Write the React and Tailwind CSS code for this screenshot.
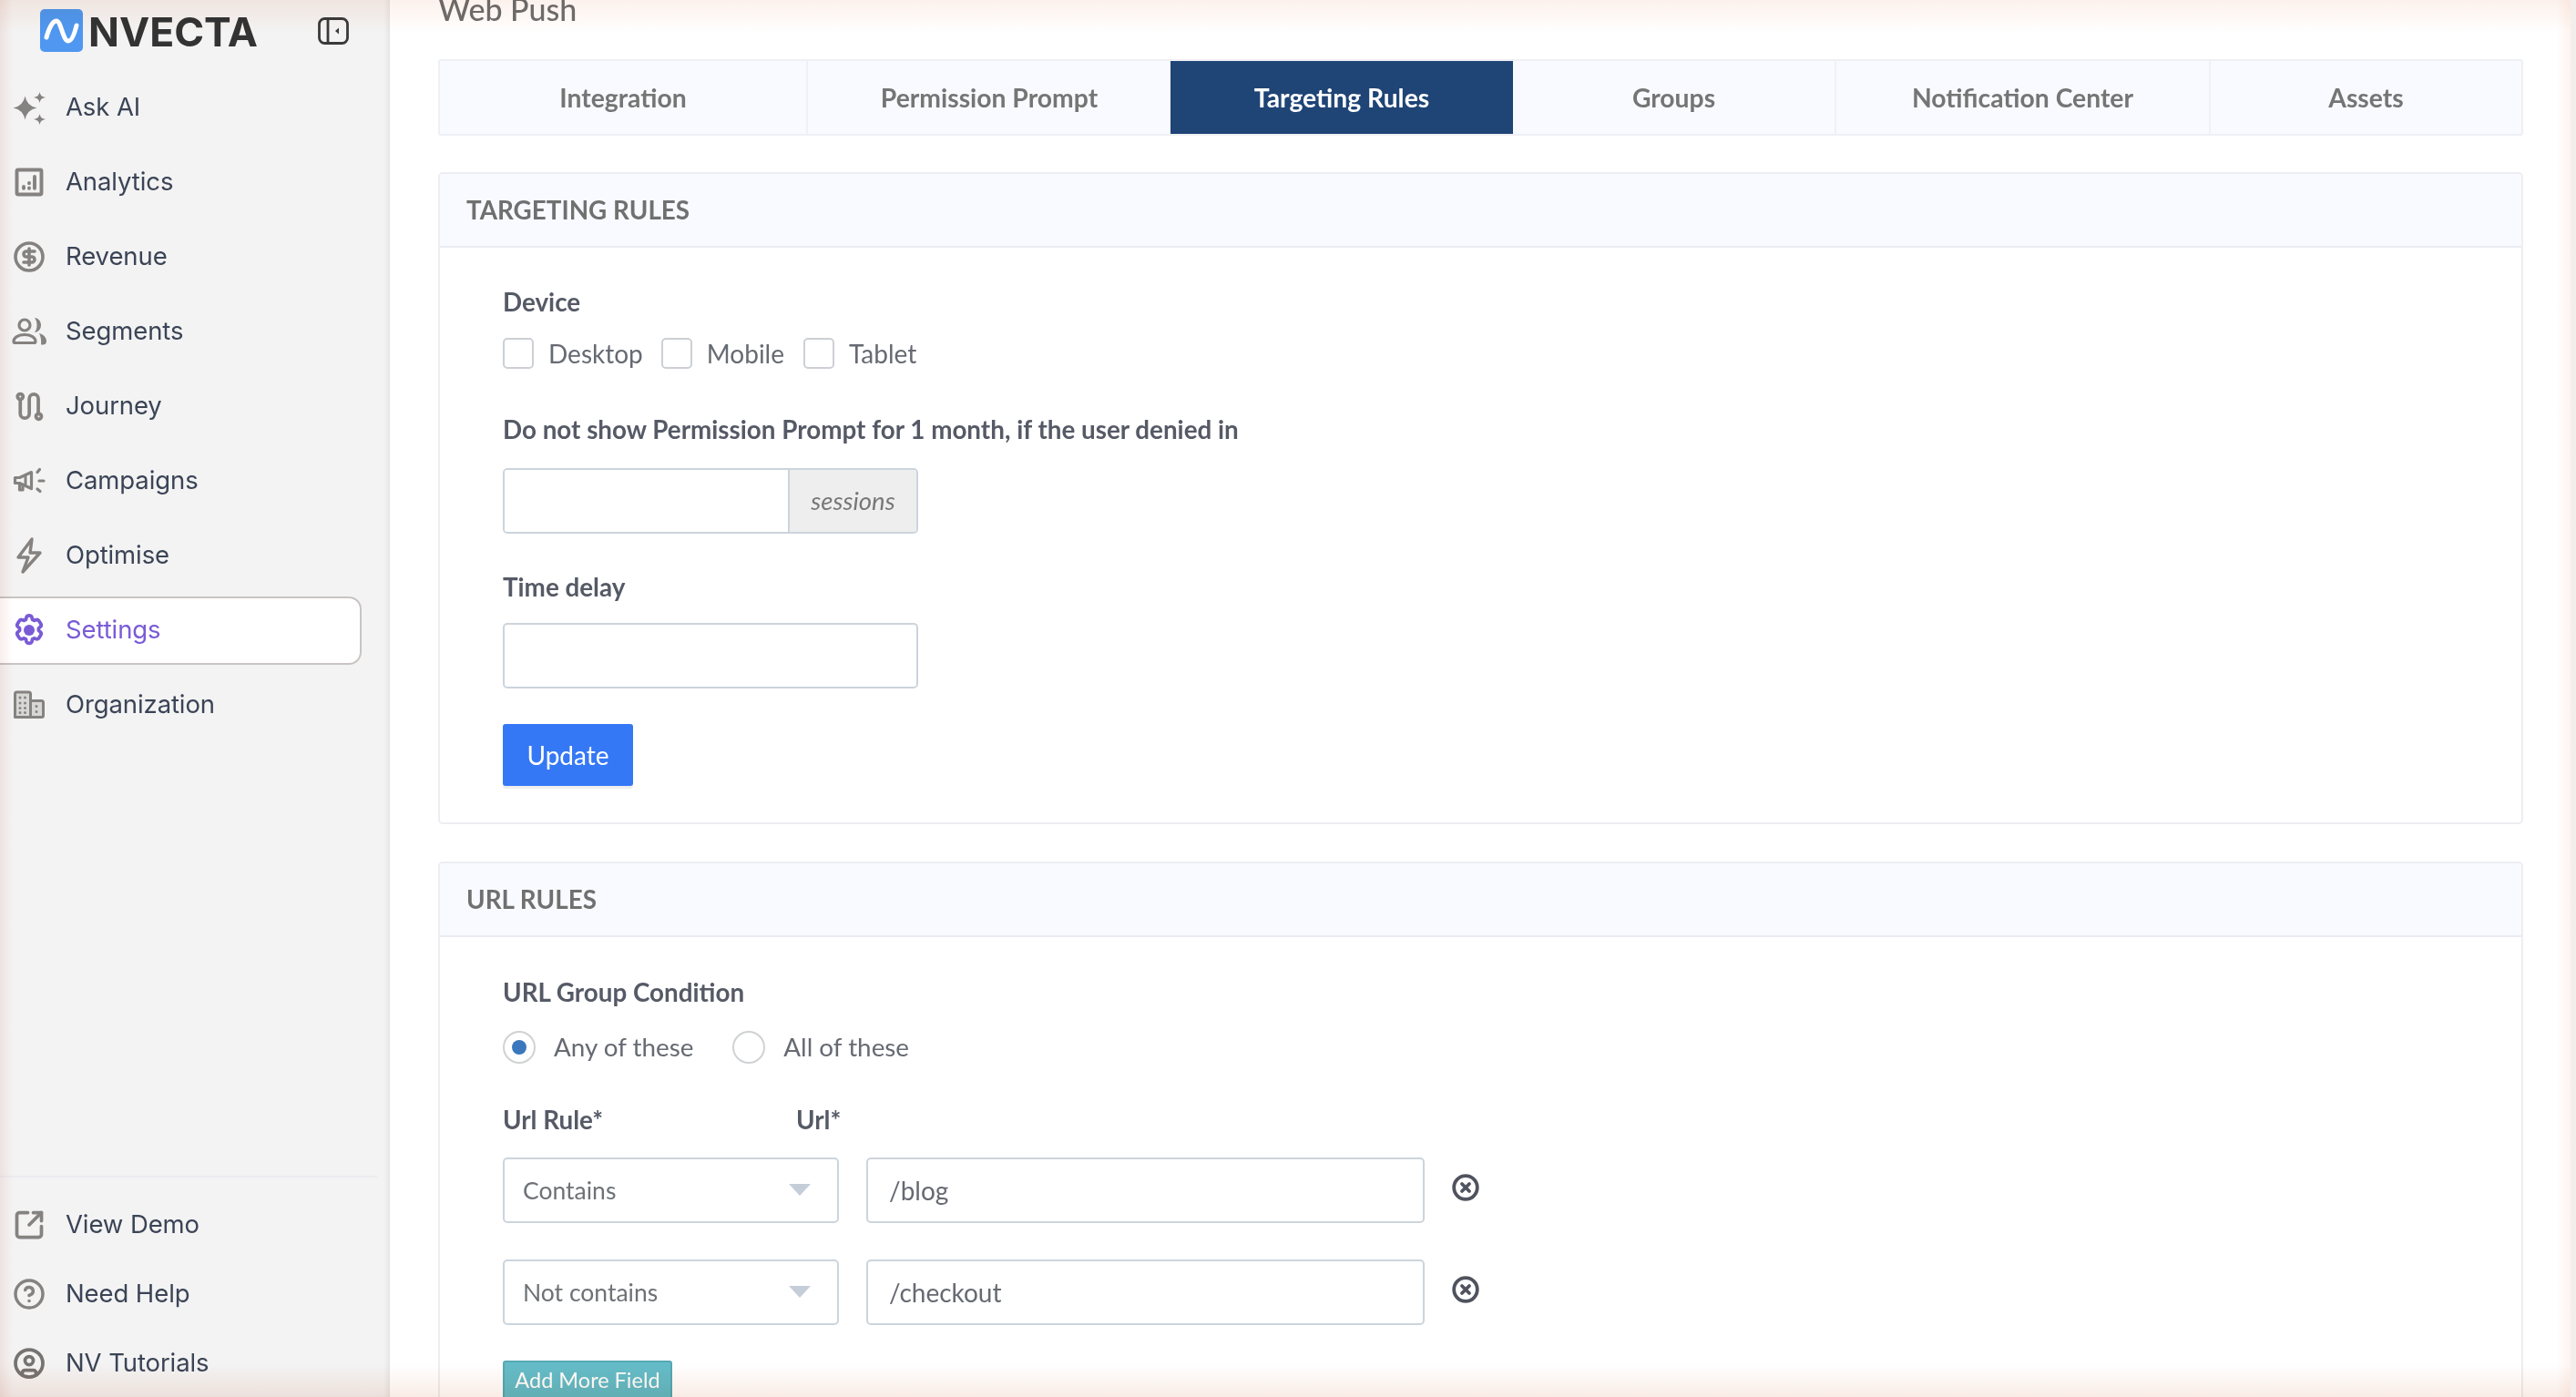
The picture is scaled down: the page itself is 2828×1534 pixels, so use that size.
import React from "react";
import { CircleDollarSign, SquareArrowOutUpRight, CircleHelp, CircleUser } from "lucide-react";

const GRAY = "#858280";

const S = ({ children, w = 2.6 }) => (
  <svg viewBox="0 0 24 24" width="36" height="36" fill="none" stroke={GRAY} strokeWidth={w} strokeLinecap="round" strokeLinejoin="round">{children}</svg>
);
const P = ({ children, vw = 38, vh = 38, w = 3.2 }) => (
  <svg viewBox={`0 0 ${vw} ${vh}`} width={vw} height={vh} className="shrink-0" fill="none" stroke={GRAY} strokeWidth={w} strokeLinecap="round" strokeLinejoin="round">{children}</svg>
);

const Sparkle = () => (
  <svg viewBox="0 0 38 38" width="38" height="38" className="shrink-0" fill={GRAY} stroke="none">
    <path d="M14.5 6.5Q16.5 17.5 27.5 19.5 16.5 21.5 14.5 32.5 12.5 21.5 1.5 19.5 12.5 17.5 14.5 6.5Z" />
    <path d="M30.5 2Q31.2 7.3 37 8 31.2 8.7 30.5 14 29.8 8.7 24 8 29.8 7.3 30.5 2Z" />
    <path d="M30.5 26Q31.2 31.3 37 32 31.2 32.7 30.5 38 29.8 32.7 24 32 29.8 31.3 30.5 26Z" />
  </svg>
);
const Analytics = () => (
  <S><rect x="3" y="3" width="18" height="18" rx="1" /><path d="M8 16.5v-1.2M12 16.5v-.2M12 12.8v-.2M16 16.5V8" /></S>
);
const Segments = () => (
  <P>
    <circle cx="14" cy="12" r="6" />
    <path d="M2 30c0-4.500 5-7.500 12-7.500s12 3 12 7.500c0 1-.8 1.500-1.500 1.500h-21C2.800 31.500 2 31 2 30Z" />
    <path d="M25 4c4 .3 7 3.500 7 8s-3 7.700-7 8c1.700-2 2.500-4.700 2.500-8S26.700 6 25 4Z" fill={GRAY} stroke="none" />
    <path d="M30 21c4.500 1 8 4.500 8 8.500 0 2.500-1.200 4-4 4h-2c.6-4.500-.2-9-2-12.500Z" fill={GRAY} stroke="none" />
  </P>
);
const Journey = () => (
  <S w="2.5">
    <circle cx="5.500" cy="5" r="2" />
    <circle cx="19" cy="19.500" r="2" />
    <path d="M5.500 7v10.500a3.300 3.300 0 0 0 6.600 0V6.500a3.300 3.300 0 0 1 6.600 0v11" />
  </S>
);
const Campaign = () => (
  <P vw={36} vh={36}>
    <path d="M2.500 14.500v6h5l13 6V8.500l-13 6Z" />
    <path d="M7.500 21v7h3.500v-5" />
    <path d="M14 13v9" strokeWidth="3" />
    <path d="M27 8.500l2.500-3M29 18h5M27 27l3 2.500" />
  </P>
);
const Bolt = () => (
  <P vw={36} vh={42} w={3.4}><path d="M21 3 6 23H17L11 39 30 18H19Z" /></P>
);
const Gear = () => (
  <svg viewBox="0 0 24 24" width="38" height="38" className="shrink-0" fill="none" stroke="#7a5bd6" strokeWidth="2.400" strokeLinejoin="round">
    <path d="M12 1.800c1 0 1.800.7 2 1.600l.2 1.200 1.300.7 1.100-.4c.9-.3 1.900 0 2.400.9l1 1.600c.5.8.3 1.900-.5 2.500l-.9.8v1.500l.9.8c.8.6 1 1.700.5 2.500l-1 1.600c-.5.9-1.500 1.200-2.400.9l-1.100-.4-1.300.7-.2 1.200c-.2.9-1 1.600-2 1.600s-1.800-.7-2-1.600l-.2-1.200-1.300-.7-1.100.4c-.9.3-1.900 0-2.400-.9l-1-1.600c-.5-.8-.3-1.900.5-2.500l.9-.8v-1.500l-.9-.8c-.8-.6-1-1.700-.5-2.500l1-1.600c.5-.9 1.500-1.200 2.400-.9l1.100.4 1.300-.7.2-1.200c.2-.9 1-1.600 2-1.600Z" />
    <circle cx="12" cy="12" r="3.800" fill="#7a5bd6" stroke="none" />
  </svg>
);
const Org = () => (
  <P vw={36} vh={32} w={3}>
    <path d="M2.500 29.500V4C2.500 3 3.300 2 4.500 2h13c1.200 0 2 1 2 2v7.500H31.500c1.200 0 2 .8 2 2V28c0 1-.8 1.500-2 1.500Z" fill={GRAY} fillOpacity="0.25" />
    <path d="M8 8v.1M13.500 8v.1M8 14v.1M13.500 14v.1M8 19.500v.1M13.500 19.500v.1M8 24.500v.1M13.500 24.500v.1M19.500 11.500V29.500M26 17.500v.1M26 23.500v.1" />
  </P>
);

const items = [
  ["Ask AI", <Sparkle />],
  ["Analytics", <Analytics />],
  ["Revenue", <CircleDollarSign size={36} color={GRAY} strokeWidth={2.4} />],
  ["Segments", <Segments />],
  ["Journey", <Journey />],
  ["Campaigns", <Campaign />],
  ["Optimise", <Bolt />],
  ["Settings", <Gear />],
  ["Organization", <Org />],
];
const bottom = [
  ["View Demo", <SquareArrowOutUpRight size={36} color={GRAY} strokeWidth={2.5} />],
  ["Need Help", <CircleHelp size={36} color={GRAY} strokeWidth={2.3} />],
  ["NV Tutorials", <CircleUser size={36} color="#777370" strokeWidth={2.5} />],
];

function NavItem({ label, icon, active, h }) {
  return (
    <div className={`${h} flex items-center`}>
      <div
        className={`flex h-[75px] w-[397px] items-center gap-[23px] rounded-r-[14px] pl-[14px] text-[27.5px] tracking-[-0.1px] ${
          active ? "border-2 border-l-0 border-[#c9c4c2] bg-white text-[#7a5bd6]" : "text-[#3b4456]"
        }`}
      >
        <span className="flex w-[36px] shrink-0 items-center justify-center">{icon}</span>
        <span className="-ml-[1px]">{label}</span>
      </div>
    </div>
  );
}

function Sidebar() {
  return (
    <aside className="z-10 flex h-full w-[428px] shrink-0 flex-col bg-[#f3f3f3] font-['Inter',sans-serif] shadow-[inset_-6px_0_6px_-4px_rgba(0,0,0,0.08)]">
      <div className="flex h-[77px] items-start pt-[10px] pl-[44px]">
        <div className="flex h-[47px] w-[47px] items-center justify-center rounded-[5px] bg-[#4f97f0]">
          <svg viewBox="0 0 47 47" width="47" height="47" fill="none" stroke="#fff" strokeWidth="5" strokeLinecap="round">
            <path d="M7 31C10 20 14 13 18 13 23 13 25 35 31 35 35 35 38 26 40 18" />
          </svg>
        </div>
        <div className="mt-[3px] ml-[6px] w-[252px] text-[44.500px] leading-[44px] font-bold text-[#333333]">NVECTA</div>
        <svg className="mt-[9px]" viewBox="0 0 34 30" width="34" height="30" fill="none" stroke="#3a3a3a" strokeWidth="2.800">
          <rect x="1.500" y="1.500" width="31" height="27" rx="6" />
          <path d="M11 2v26" />
          <path d="M23 11.500v7l-4-3.500Z" fill="#3a3a3a" stroke="none" />
        </svg>
      </div>
      <nav className="flex flex-col">
        {items.map(([l, i]) => (
          <NavItem key={l} label={l} icon={i} active={l === "Settings"} h="h-[82px]" />
        ))}
      </nav>
      <div className="mt-auto mr-[14px] -mb-[1px] border-t-2 border-[#ececf0] pt-[14px]">
        {bottom.map(([l, i]) => (
          <NavItem key={l} label={l} icon={i} h="h-[76px]" />
        ))}
      </div>
    </aside>
  );
}

const tabs = [
  ["Integration", "w-[402px]"],
  ["Permission Prompt", "w-[400px]"],
  ["Targeting Rules", "w-[376px]"],
  ["Groups", "w-[353px]"],
  ["Notification Center", "w-[411px]"],
  ["Assets", "flex-1"],
];

function Tabs() {
  return (
    <div className="flex h-[84px] overflow-hidden rounded-[3px] border-2 border-[#eff0f4] bg-[#f9faff]">
      {tabs.map(([t, w], i) => (
        <div
          key={t}
          className={`${w} flex items-center justify-center text-[28.300px] font-bold ${
            t === "Targeting Rules" ? "bg-[#1f4476] text-white" : "text-[#757575]"
          } ${i > 0 && t !== "Targeting Rules" && t !== "Groups" ? "border-l-2 border-[#f0f1f4]" : ""}`}
        >
          {t}
        </div>
      ))}
    </div>
  );
}

function Card({ title, children, className }) {
  return (
    <section className={`overflow-hidden rounded-[5px] border-2 border-[#edeef1] bg-white ${className}`}>
      <header className="flex h-[81px] items-center border-b-2 border-[#e9ecf2] bg-[#f9faff] pl-[29px] text-[27.800px] font-bold text-[#707070]">
        {title}
      </header>
      {children}
    </section>
  );
}

const Label = ({ children, className = "" }) => (
  <div className={`text-[27.800px] leading-[34px] font-bold text-[#555a66] ${className}`}>{children}</div>
);

function Check({ label, className = "" }) {
  return (
    <div className={`flex items-center ${className}`}>
      <span className="h-[34px] w-[34px] rounded-[5px] border-2 border-[#ccd0d4] bg-white" />
      <span className="ml-[16px] text-[28px] text-[#666a72]">{label}</span>
    </div>
  );
}

function Radio({ label, on, className = "" }) {
  return (
    <div className={`flex items-center ${className}`}>
      <span className="flex h-[36px] w-[36px] items-center justify-center rounded-full border-2 border-[#d0d2d4] bg-white">
        {on && <span className="h-[16px] w-[16px] rounded-full bg-[#3a77bd]" />}
      </span>
      <span className="ml-[20px] text-[27.800px] text-[#666a72]">{label}</span>
    </div>
  );
}

function Rule({ rule, url, className = "" }) {
  return (
    <div className={`flex items-start ${className}`}>
      <div className="flex h-[72px] w-[369px] items-center justify-between rounded-[5px] border-2 border-[#ccd4dc] bg-white pr-[29px] pl-[20px] text-[26.500px] text-[#6e7277]">
        <span className="mt-[2px]">{rule}</span>
        <span className="-mt-[1px] h-0 w-0 border-x-[12px] border-t-[13px] border-x-transparent border-t-[#c5ced8]" />
      </div>
      <div className="ml-[30px] flex h-[72px] w-[613px] items-center rounded-[5px] border-2 border-[#ccd4dc] bg-white pl-[23px] text-[28px] text-[#666a72]">
        {url}
      </div>
      <svg className="mt-[18px] ml-[30px]" viewBox="0 0 30 30" width="30" height="30" fill="none" stroke="#50535e" strokeWidth="3.800" strokeLinecap="round">
        <circle cx="15" cy="15" r="12.800" />
        <path d="M11 11l8 8M19 11l-8 8" />
      </svg>
    </div>
  );
}

function Main() {
  return (
    <main className="min-w-0 flex-1 pr-[58px] pl-[53px] font-['Lato',sans-serif]">
      <h1 className="-mt-[12px] h-[77px] text-[34px] leading-[44px] font-medium text-[#6e6e6e]">Web Push</h1>
      <Tabs />
      <Card title="TARGETING RULES" className="mt-[40px] h-[716px]">
        <div className="pt-[43px] pl-[69px]">
          <Label>Device</Label>
          <div className="mt-[18px] flex items-center">
            <Check label="Desktop" />
            <Check label="Mobile" className="ml-[20px]" />
            <Check label="Tablet" className="ml-[21px]" />
          </div>
          <Label className="mt-[46px]">Do not show Permission Prompt for 1 month, if the user denied in</Label>
          <div className="mt-[25px] flex h-[72px] w-[456px] overflow-hidden rounded-[5px] border-2 border-[#ccd4dc]">
            <input className="w-[311px] bg-white outline-none" aria-label="sessions" />
            <div className="flex flex-1 items-center justify-center border-l-2 border-[#ccd4dc] bg-[#eeeeee] text-[27.500px] text-[#777777] italic">sessions</div>
          </div>
          <Label className="mt-[42px]">Time delay</Label>
          <input aria-label="Time delay" className="mt-[22px] block h-[72px] w-[456px] rounded-[5px] border-2 border-[#ccd4dc] bg-white outline-none" />
          <div className="mt-[39px] flex h-[68px] w-[143px] items-center justify-center rounded-[3px] bg-[#3578f6] text-[28px] text-white shadow-[0_3px_0_#eeeeee]">Update</div>
        </div>
      </Card>
      <Card title="URL RULES" className="mt-[41px] h-[700px]">
        <div className="pt-[44px] pl-[69px]">
          <Label>URL Group Condition</Label>
          <div className="mt-[22px] flex items-center">
            <Radio label="Any of these" on />
            <Radio label="All of these" className="ml-[43px]" />
          </div>
          <div className="mt-[42px] flex">
            <Label className="w-[322px]">Url Rule*</Label>
            <Label>Url*</Label>
          </div>
          <Rule rule="Contains" url="/blog" className="mt-[24px]" />
          <Rule rule="Not contains" url="/checkout" className="mt-[40px]" />
          <div className="mt-[39px] flex h-[60px] w-[186px] items-start justify-center rounded-[3px] border-2 border-[#56a8b4] bg-[#64bcc8] pt-[4px] text-[23.500px] leading-[30px] text-white">Add More Field</div>
        </div>
      </Card>
    </main>
  );
}

export default function App() {
  return (
    <div className="relative flex h-[1534px] w-[2828px] overflow-hidden bg-white">
      <Sidebar />
      <Main />
      <div className="pointer-events-none absolute inset-x-0 top-0 z-20 h-[36px] bg-gradient-to-b from-[#fcf1ec] to-white mix-blend-multiply" />
      <div className="pointer-events-none absolute inset-x-0 bottom-0 z-20 h-[36px] bg-gradient-to-t from-[#f9ece6] to-white mix-blend-multiply" />
      <div className="pointer-events-none absolute inset-y-0 left-0 z-20 w-[14px] bg-gradient-to-r from-[#f9eeec] to-white mix-blend-multiply" />
      <div className="pointer-events-none absolute inset-y-0 right-[6px] z-20 w-[16px] bg-gradient-to-l from-[#fdf4f0] to-white mix-blend-multiply" />
      <div className="pointer-events-none absolute inset-y-0 right-0 z-20 w-[6px] bg-[#f3eeeb]" />
    </div>
  );
}
